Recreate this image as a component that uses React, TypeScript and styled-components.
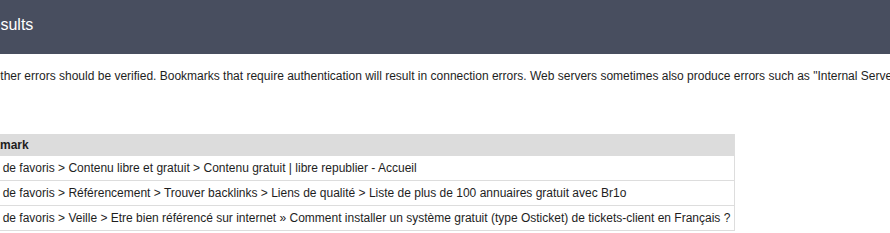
import styled, { createGlobalStyle } from "styled-components";

const GlobalStyle = createGlobalStyle`
    html, body {
        margin: 0;
        padding: 0;
        background: #ffffff;
    }
    body {
        font-family: "Liberation Sans", Arial, sans-serif;
        font-size: 12px;
        color: #1e1e1e;
        overflow: hidden;
    }
`;

// the page is seen scrolled sideways, so the whole sheet starts left of the window
const Page = styled.div`
    width: 890px;
    height: 233px;
    overflow: hidden;
`;

const Sheet = styled.div`
    margin-left: -40px;
    width: 1400px;
`;

const Header = styled.header`
    background-color: #484e5f;
    height: 54px;
    display: flex;
    align-items: center;
    padding-left: 20px;

    h1 {
        margin: 0;
        font-size: 16px;
        font-weight: 400;
        color: #ffffff;
        padding-bottom: 4px;
    }
`;

const Intro = styled.p`
    margin: 15px 0 0 0;
    padding-left: 31px;
    line-height: 15px;
    white-space: nowrap;
`;

const Table = styled.table`
    margin-top: 50px;
    width: 775px;
    border-collapse: collapse;
    border-right: 1px solid #dddddd;

    th {
        background-color: #dcdcdc;
        text-align: left;
        font-weight: 700;
        font-size: 12px;
        height: 22px;
        padding: 0 0 0 10px;
    }

    td {
        height: 24px;
        padding: 0 0 0 10px;
        border-bottom: 1px solid #dddddd;
        white-space: nowrap;
    }
`;

const rows = [
    "Barre de favoris > Contenu libre et gratuit > Contenu gratuit | libre republier - Accueil",
    "Barre de favoris > Référencement > Trouver backlinks > Liens de qualité > Liste de plus de 100 annuaires gratuit avec Br1o",
    "Barre de favoris > Veille > Etre bien référencé sur internet » Comment installer un système gratuit (type Osticket) de tickets-client en Français ?",
];

export default function App() {
    return (
        <Page>
            <GlobalStyle />
            <Sheet>
                <Header>
                    <h1>Results</h1>
                </Header>

                <Intro>
                    Other errors should be verified. Bookmarks that require authentication will result in connection errors. Web servers sometimes also produce errors such as "Internal Server Error".
                </Intro>

                <Table>
                    <thead>
                        <tr>
                            <th>Bookmark</th>
                        </tr>
                    </thead>
                    <tbody>
                        {rows.map((r) => (
                            <tr key={r}>
                                <td>{r}</td>
                            </tr>
                        ))}
                    </tbody>
                </Table>
            </Sheet>
        </Page>
    );
}
